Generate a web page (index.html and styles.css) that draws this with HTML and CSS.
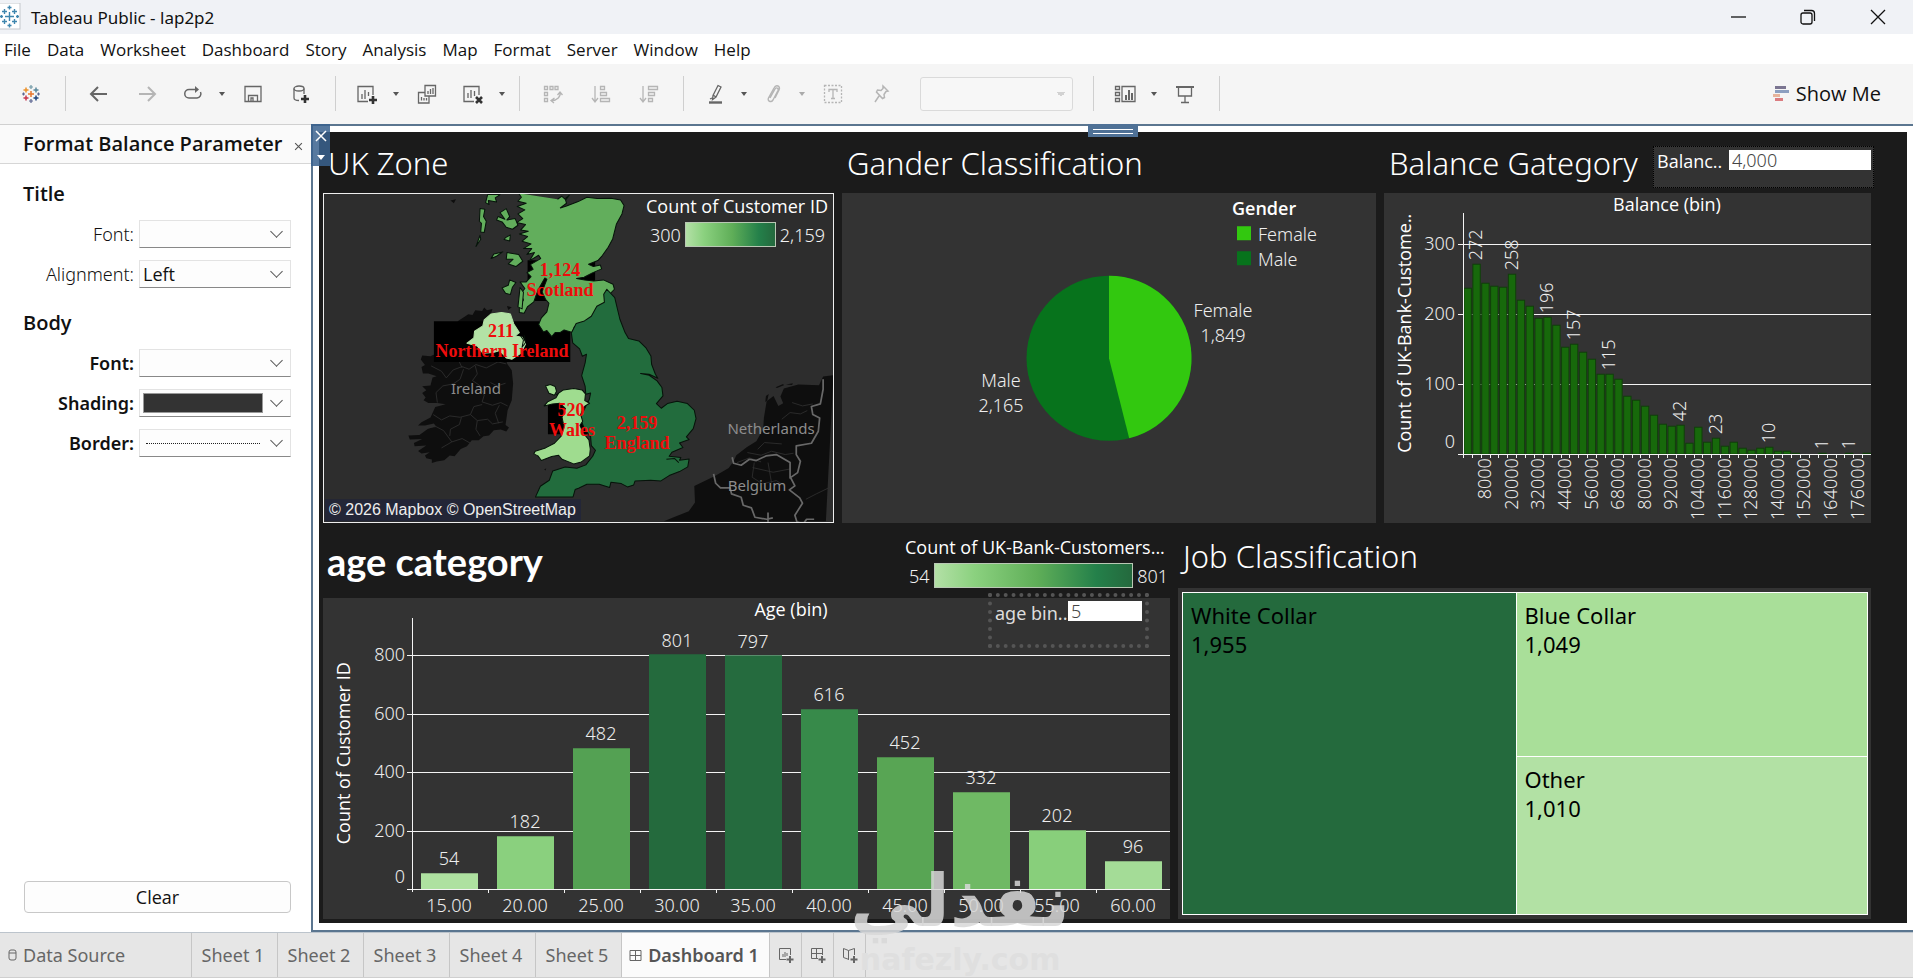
FILE: index.html
```html
<!DOCTYPE html>
<html lang="en">
<head>
<meta charset="utf-8">
<meta name="viewport" content="width=device-width, initial-scale=1">
<title>Tableau Public - lap2p2</title>
<link rel="stylesheet" href="styles.css">
</head>
<body>
<div class="app">
  <header class="titlebar">
    <svg class="app-icon" viewBox="0 0 22 28" width="22" height="28"><rect x="-2" y="0" width="22" height="26" fill="#fff" stroke="#c4c7cc"/><g stroke="#3f86ae" stroke-width="1.4"><path d="M9.500 9v9M5 13.500h9M9.500 2.500v4M7.500 4.500h4M9.500 20.500v4M7.500 22.500h4M4.500 6v5M2 8.500h5M14.500 6v5M12 8.500h5M4.500 16v5M2 18.500h5M14.500 16v5M12 18.500h5M1.500 12v3M0 13.500h3M17.500 12v3M16 13.500h3"/></g></svg>
    <span class="app-title">Tableau Public - lap2p2</span>
    <div class="window-controls">
      <button aria-label="Minimize"><svg width="16" height="16" viewBox="0 0 16 16"><path d="M1 8h15"/></svg></button>
      <button aria-label="Restore"><svg width="16" height="16" viewBox="0 0 16 16"><rect x="1" y="4" width="11" height="11" rx="2"/><path d="M4 1.500h7.500a3 3 0 0 1 3 3V12"/></svg></button>
      <button aria-label="Close"><svg width="16" height="16" viewBox="0 0 16 16"><path d="M1 1l14 14M15 1L1 15"/></svg></button>
    </div>
  </header>

  <nav class="menubar" aria-label="Main menu">
    <button>File</button><button>Data</button><button>Worksheet</button><button>Dashboard</button><button>Story</button><button>Analysis</button><button>Map</button><button>Format</button><button>Server</button><button>Window</button><button>Help</button>
  </nav>

  <div class="toolbar" role="toolbar" aria-label="Toolbar">
    <button class="tool logo" aria-label="Start page"><svg width="20" height="20" viewBox="0 0 20 20"><g fill="none" stroke-width="1.500"><path stroke="#e8762d" d="M10 7v6M7 10h6"/><path stroke="#c7364d" d="M5 11.500v5M2.500 14h5"/><path stroke="#eb9129" d="M5 3.500v5M2.500 6h5"/><path stroke="#59879b" d="M15 3.500v5M12.500 6h5"/><path stroke="#1f447e" d="M15 11.500v5M12.500 14h5"/><path stroke="#7199a6" stroke-width="1.200" d="M10 1v4M8 3h4"/><path stroke="#5b6591" stroke-width="1.200" d="M10 15v4M8 17h4M17.500 8.500v3M16 10h3M2.500 8.500v3M1 10h3"/></g></svg></button>
    <span class="sep"></span>
    <button class="tool" aria-label="Undo"><svg width="20" height="20" viewBox="0 0 20 20"><path d="M18 10H3M9 3l-7 7 7 7" stroke-width="2"/></svg></button>
    <button class="tool dim" aria-label="Redo"><svg width="20" height="20" viewBox="0 0 20 20"><path d="M2 10h15M11 3l7 7-7 7" stroke-width="2"/></svg></button>
    <div class="split"><button class="tool" aria-label="Replay"><svg width="20" height="20" viewBox="0 0 20 20"><path d="M14 5.500H6a4 4 0 0 0 0 8.500h8a4.200 4.200 0 0 0 3.500-6" stroke-width="1.500"/><path d="M12 2l4 3.500L12 9z" class="solid"/></svg></button><button class="caret" aria-label="Replay options"></button></div>
    <button class="tool" aria-label="Save"><svg width="20" height="20" viewBox="0 0 20 20"><path d="M2 2.500h16v15H2zM5.500 17.500v-6h9v6M8 17v-3h2v3"/></svg></button>
    <button class="tool" aria-label="New data source"><svg width="20" height="20" viewBox="0 0 20 20"><ellipse cx="8" cy="4.500" rx="5" ry="2.500"/><path d="M3 4.500v9.500c0 1.500 2 2.500 5 2.500M13 4.500V10"/><path d="M14 11v8M10 15h8" class="heavy"/></svg></button>
    <span class="sep"></span>
    <div class="split"><button class="tool" aria-label="New worksheet"><svg width="22" height="20" viewBox="0 0 22 20"><path d="M12 17.500H2v-15h15V11M6 10v5M9 6v9M12.500 8v4"/><path d="M17 12v8M13 16h8" class="heavy"/></svg></button><button class="caret" aria-label="New worksheet options"></button></div>
    <button class="tool" aria-label="Duplicate"><svg width="20" height="20" viewBox="0 0 20 20"><path d="M8 1.500h10.500V12H8zM11 7v3M13.500 5v5M16 4v6M8 8.500H1.500V19H12v-7M4.500 13v3.500M7 14v2.500M9.500 14v2.500"/></svg></button>
    <div class="split"><button class="tool" aria-label="Clear sheet"><svg width="22" height="20" viewBox="0 0 22 20"><path d="M12 17.500H2v-15h15V11M6 9v5M9 6v8M12.500 7v5"/><path d="M14 13l6 6M20 13l-6 6" class="heavy"/></svg></button><button class="caret" aria-label="Clear sheet options"></button></div>
    <span class="sep"></span>
    <button class="tool dim" aria-label="Swap rows and columns"><svg width="20" height="20" viewBox="0 0 20 20"><path d="M1.500 2.500h3v3h-3zM7 2.500h3v3H7zM12 2.500h3v3h-3zM1.500 8.500h3v3h-3zM1.500 14.500h3v3h-3zM17 8.500c1 4-3 8-8 8M14.500 11l2.500-3 2.500 3M11.500 14L8 16.500l3 2.500"/></svg></button>
    <button class="tool dim" aria-label="Sort ascending"><svg width="20" height="20" viewBox="0 0 20 20"><path d="M4 2v15M1 14l3 4 3-4M9.500 2.500h4v3h-4zM9.500 8.500h6v3h-6zM9.500 14.500h9v3h-9z"/></svg></button>
    <button class="tool dim" aria-label="Sort descending"><svg width="20" height="20" viewBox="0 0 20 20"><path d="M4 2v15M1 14l3 4 3-4M9.500 2.500h9v3h-9zM9.500 8.500h6v3h-6zM9.500 14.500h4v3h-4z"/></svg></button>
    <span class="sep"></span>
    <div class="split"><button class="tool" aria-label="Highlight"><svg width="20" height="20" viewBox="0 0 20 20"><path d="M13 1.500l3 1.500-5 10-3.500 2.500.5-4zM8 11l3 2M5 15l2-1"/><path d="M4 18.500h13" class="heavy-gray"/></svg></button><button class="caret" aria-label="Highlight options"></button></div>
    <div class="split dim"><button class="tool dim" aria-label="Group"><svg width="20" height="20" viewBox="0 0 20 20"><path d="M7 14l5-9c1-2 4-1 3 1.500l-5 9.500c-2 3-6 1-4.500-2L11 4c2-4 7-2 5 2l-4 8" stroke-width="1.400"/></svg></button><button class="caret" aria-label="Group options"></button></div>
    <button class="tool dim" aria-label="Show mark labels"><svg width="20" height="20" viewBox="0 0 20 20"><rect x="1.500" y="1.500" width="17" height="17" stroke-dasharray="2 1.500"/><path d="M6 8V5.500h8V8M10 5.500v9M8 14.500h4"/></svg></button>
    <button class="tool dim" aria-label="Fix axes"><svg width="20" height="20" viewBox="0 0 20 20"><path d="M12 2l5 5-2 .5-2 3 .5 3-2 1L5.500 8l1-2 3.500.5 2-2zM8 12l-4 6" stroke-width="1.500"/></svg></button>
    <select class="fit-select" aria-label="Fit" disabled><option></option></select>
    <span class="sep"></span>
    <div class="split"><button class="tool" aria-label="Show or hide cards"><svg width="22" height="20" viewBox="0 0 22 20"><path d="M1.500 2.500h4v3h-4zM1.500 8.500h4v3h-4zM1.500 14.500h4v3h-4zM8 2.500h13v15H8z"/><path d="M12 11v5M15 6v10M18 9v7" stroke-width="2"/></svg></button><button class="caret" aria-label="Card options"></button></div>
    <button class="tool" aria-label="Presentation mode"><svg width="20" height="20" viewBox="0 0 20 20"><path d="M3.500 3v9h13V3M10 12v6M6 18.500h8"/><path d="M1 3h18" stroke-width="2"/></svg></button>
    <span class="sep"></span>
    <button class="show-me"><svg width="16" height="16" viewBox="0 0 16 16"><path fill="#7b7591" d="M2 0h11v3H2z"/><path fill="#8c9fc0" d="M2 4h14v3H2z"/><path fill="#e6b49c" d="M0 8h7v3H0z"/><path fill="#db7c80" d="M2 12h8v3H2z"/></svg>Show Me</button>
  </div>

  <main class="workspace">
    <aside class="format-pane">
      <div class="pane-head"><h2>Format Balance Parameter</h2><button class="pane-close" aria-label="Close pane"><svg width="9" height="9" viewBox="0 0 8 8"><path d="M1 1l6 6M7 1L1 7" stroke="#555"/></svg></button></div>
      <div class="pane-body">
        <h3>Title</h3>
        <div class="field"><label for="tfont">Font:</label><div class="combo"><select id="tfont"><option></option></select></div></div>
        <div class="field"><label for="talign">Alignment:</label><div class="combo"><select id="talign"><option>Left</option></select></div></div>
        <h3>Body</h3>
        <div class="field strong"><label for="bfont">Font:</label><div class="combo"><select id="bfont"><option></option></select></div></div>
        <div class="field strong"><label for="bshade">Shading:</label><div class="combo"><select id="bshade"><option></option></select><span class="swatch"></span></div></div>
        <div class="field strong"><label for="bborder">Border:</label><div class="combo"><select id="bborder"><option></option></select><span class="dotline"></span></div></div>
      </div>
      <button class="clear">Clear</button>
    </aside>

    <section class="canvas">
      <div class="grip" aria-hidden="true"></div>
      <div class="float-tools"><button aria-label="Remove from dashboard"><svg width="12" height="12" viewBox="0 0 12 12"><path d="M1 1l10 10M11 1L1 11" stroke="#fff" stroke-width="1.500"/></svg></button><button aria-label="More options"><svg width="8" height="5" viewBox="0 0 8 5"><path d="M0 0h8L4 5z" fill="#fff"/></svg></button></div>
      <div class="dashboard">
        <div class="row top">
          <article class="tile">
            <div class="tile-head"><h1>UK Zone</h1></div>
            <div class="panel map">
              <svg class="chart" viewBox="1 1 509 328" role="img" aria-label="Map of customers by UK region">
                <g transform="scale(.34444 .33333) translate(-38 -222)">
                  <g fill="#0e0e0e">
                    <path d="M430 605l30-20 12 2 8-14 20 2 6-10 8 8 16-4-4 14 20 10 20 60 6 80 14 20 4 40-4 50-12 30-6 44 10 8-8 12-16-6-20 2-14 16-16 2-14 12-20 0-14 18-18 8-18 22-14-2-16 14-22 4-14 4 0-10-16-4-4-8 14-10-24 4-10-8 24-16-34 2-2-10 24-12-36 2-4-12 32-2 24-18 24-8-6-8-26 6-20 0 10-10 26-14 14-32 30-8-24-4-26 0-14-8 6-8-10-14 12-8-12-12 24-2 6-24 12-4-24-8-16 0-4-20 10-6-12-16 4-12 24 2 20-10 36-28z"/>
                    <path d="M1520 768l-30 4-12 26-60-2-42 12-10 24 8 20-14 8-14-30-20 16-8 50-2 34-20 36-28 18-30 24-8 18-14 20-40 24-60 30 2 50-18 26-44 18-28 12h470z"/>
                    <path d="M1324 830l8-6-4 20-6 4zM1352 804l22-10 2 4-20 8zM1382 796l20-4-2 5zM408 244l16-4-6 12zM680 1050l6-2-2 6zM572 560l14 4-10 8z"/>
                  </g>
                  <g fill="none" stroke="#2f2f2f" stroke-width="2.500">
                    <path d="M352 740l30 16 14 20 20-24 26-10 20 8 20-14 30 10 34-18 24 6M370 850l-4-30 20-20 30-6 20-14 10-30M480 740l6 24-14 20 20 14 14 30-6 20 30 10 24-8 20 10M500 856l-24 6-10 24-30 8-30-4-24 12-24-16M440 894l-6 22-26 14-2 20M466 886l20 18 30-4 14 14 30-6M486 904l-4 26 12 20M330 926l36-4 22 12 24 34-30 18M412 968l30-10 24 14M550 858l-12 24 10 30M448 700l-16 24 10 22M524 790l20 10 24-8"/>
                    <path d="M1270 1000l40 8 30-12 40 10 24-4M1240 1030l36-14 34 12M1300 990l20-20 50 4M1370 900l24-20 30 4 20-10M1400 850l30 10 30-6M1440 1140l30-16 40-20M1290 1030l-6 44 30 20 40-10 24 16M1330 1030l10 60M1285 1045l60 14 50-10"/>
                  </g>
                  <g fill="none" stroke="#686868" stroke-width="5" stroke-linejoin="round">
                    <path d="M1490 780v30l-8 44-26 8 4 24 20 10-4 40-20 36-44 8 0 26 12 20-8 34-22 16 0-46-40-24-30 4-28 14-20-4-24 18-22-6-4-18M1172 1064l6 28 14 14 28 0 4 18 28 10 6 24 24 8 10 28 34 6 18-4M1396 1076l12 24-16 12 30 24 8 16-22 36 6 20 18 6 10-14 22 0M1330 1180v28"/>
                  </g>
                  <g fill="#000"><path d="M360 606h396v122H360zM632 423h196v122H632zM691 845h140v100H691z"/></g>
                  <g stroke="#06130a" stroke-width="3" stroke-linejoin="round">
                    <path fill="#62ae5c" d="M606 222l8 12-10 12 24 6-26 10 22 10-20 12 14 14-18 12 26 6-14 16 22 4-26 8 24 8-16 14 26 8-22 14 24 0-14 18 22-6-14 24 26-16 6 10-30 18 8 14-18 10 12 12-14 16-18 0 14 20-12 16 8 18-12 18 0 20 14 2 10-20 18-14 8-24 10-22 14-26 6 4-14 38 10 22 10 12-6 26-16 18-8 20 14 22 10-4 14 18 10-12 14 0 12-8 24 8 6-18 24-2 20-6 16-24 22-30 22-12-2-23 14-15-4-15-28-13-28 3-26-3-24-4 22-4 24-13 27-12-4-12-20 5-14-7 27-11 13-15 17-25 13-25 11-45 16-30 6-25-10-17-28-5-40 1-30-4-25 13-34 13-18 6 18-14-4-14 12-10-10 14-12-11-12 9-9z"/>
                    <path fill="#62ae5c" d="M570 268l10 24-8 10 24-4 8 20-16 12-18-6-12-16-16-6 4-10 20 8-14-20zM516 226l36 0-14 10 4 12-24-4 2 12-10-6zM494 268l14 2-4 22 8 14-6 34-10-2 2-26-6-6zM494 348l2 12-14 22zM526 418l8-14 26-6-20 14zM580 482l18 8-10 14-6 22-14-4-10-16 18-8zM572 400l34 6 12 20-20 16-22-8 14-14-20 0zM568 355l14-8-2 18-16-4zM610 505l10 14-4 50-12-6z"/>
                    <path fill="#226c3d" d="M862 510l23 25 8 35 7 30 15 40 10 18 30 7 20 20 15 25 2 25 11 30 7 12-25-12-25-2 25 5 23 17 14 20 3 25-19 23 14 14 18-14 28-7 30 7 20 20 5 25-8 30-20 25 8 8-28 10 10 14-32 14-8 12 34 4-4 8 28-4-4 24-24 14-30 12-24 16-30-2-45 2-4 12-18 6-18-10-30-4-4 16-30-10-36 0-24 12-10 4-6 22H655l14-32 26-18 10-28 36-12 34 4 26-10 20-26 8-18-12-14-2-26-18-24-12-32 16-36 10-20 4-20-14 4-2-24-10-32 10-38 4-26-12 6-8-22-20-18-4-30 14-28 24-8 20-14 16-30 22-12-2-24z"/>
                    <path fill="#9fdc8f" d="M684 800l14-4 14 6 4 14-6 12-16-6zM716 826l20-14 30-4 24 4 10 12-2 20 14 8-16 10-10 24 6 20-8 12 10 24 16 20 4 28-2 20-24 18-22 6-34-14-10-12-20 4-30 12-10-14-12-6 4-8 30-10 26-14 20-22 8-26-6-30 10-26-16-16-22 2-24 6 10-12 24-12 8-14z"/>
                    <path fill="#b3e2a5" stroke="#b3e2a5" d="M526 584l30-4 26 4 10 30 16 26-12 10 20 4 10 20-14 28-26 18-16-4-18-22-20 6-30 2-16-22-30-8 20-16 2-20 24-16 4-18z"/>
                    <path fill="none" d="M612 650l8 12-4 22 10-14-4-22M1035 1020l24-2 12 12"/>
                  </g>
                </g>
                <rect x="2" y="306" width="256" height="22" fill="#232637"/>
                <g class="map-attr"><text x="6" y="322">© 2026 Mapbox © OpenStreetMap</text></g>
                <g class="map-place"><text x="153" y="201">Ireland</text><text x="448" y="241">Netherlands</text><text x="434" y="298">Belgium</text></g>
                <g class="map-mark"><text x="237" y="83">1,124</text><text x="237" y="103">Scotland</text><text x="178" y="144">211</text><text x="179" y="164">Northern Ireland</text><text x="248" y="223">520</text><text x="249" y="243">Wales</text><text x="314" y="236">2,159</text><text x="314" y="256">England</text></g>
              </svg>
              <div class="legend map-legend"><strong>Count of Customer ID</strong><div class="ramp-row"><span>300</span><i class="ramp"></i><span>2,159</span></div></div>
            </div>
          </article>

          <article class="tile">
            <div class="tile-head"><h1>Gander Classification</h1></div>
            <div class="panel">
              <svg class="chart" viewBox="0 0 534 330" role="img" aria-label="Pie chart of gender">
                <circle cx="267" cy="165" r="82.500" fill="#07731c"/>
                <path d="M267 165V82.500A82.500 82.500 0 0 1 287.200 245z" fill="#32c80f"/>
                <g class="mid"><text x="381" y="124">Female</text><text x="381" y="149">1,849</text><text x="159" y="194">Male</text><text x="159" y="219">2,165</text></g>
                <text class="semi" x="390" y="22">Gender</text>
                <rect x="395" y="33" width="14" height="14" fill="#32c80f"/><rect x="395" y="58" width="14" height="14" fill="#07731c"/>
                <text x="416" y="48">Female</text><text x="416" y="73">Male</text>
              </svg>
            </div>
          </article>

          <article class="tile">
            <div class="tile-head"><h1>Balance Gategory</h1><div class="param balance"><label for="bal">Balanc..</label><input id="bal" type="text" value="4,000"></div></div>
            <div class="panel"><svg class="chart" id="balance-chart" viewBox="0 0 487 330" role="img" aria-label="Histogram of balance">
              <text class="axis-title" x="283" y="18" text-anchor="middle">Balance (bin)</text>
              <text class="axis-title" transform="translate(27 140) rotate(-90)" text-anchor="middle">Count of UK-Bank-Custome..</text>
              <g class="grid"><path d="M74 51h413M74 121h413M74 191h413"/></g>
              <g class="end"><text x="71" y="57">300</text><text x="71" y="127">200</text><text x="71" y="197">100</text><text x="71" y="255">0</text></g>
            </svg></div>
          </article>
        </div>

        <div class="row bottom">
          <article class="tile">
            <div class="tile-head tall"><h1 class="age-title">age category</h1><div class="legend age-legend"><strong>Count of UK-Bank-Customers...</strong><div class="ramp-row"><span>54</span><i class="ramp"></i><span>801</span></div></div></div>
            <div class="panel">
              <svg class="chart" viewBox="0 0 847 320" role="img" aria-label="Bar chart of age">
                <text class="axis-title" x="468" y="18" text-anchor="middle">Age (bin)</text>
                <text class="axis-title" transform="translate(27 155) rotate(-90)" text-anchor="middle">Count of Customer ID</text>
                <g class="grid"><path d="M84 57h763M84 116h763M84 174h763M84 233h763"/></g>
                <g class="end"><text x="82" y="63">800</text><text x="82" y="122">600</text><text x="82" y="180">400</text><text x="82" y="239">200</text><text x="82" y="285">0</text></g>
                <rect x="98" y="275" width="57" height="16" fill="#aee1a0"/><rect x="174" y="238" width="57" height="53" fill="#8ad07e"/><rect x="250" y="150" width="57" height="141" fill="#54a153"/><rect x="326" y="56" width="57" height="235" fill="#246a3d"/><rect x="402" y="57" width="57" height="234" fill="#256b3e"/><rect x="478" y="111" width="57" height="180" fill="#378a4a"/><rect x="554" y="159" width="57" height="132" fill="#58a554"/><rect x="630" y="194" width="57" height="97" fill="#6fb964"/><rect x="706" y="232" width="57" height="59" fill="#88cf7b"/><rect x="782" y="263" width="57" height="28" fill="#a4dc97"/>
                <g class="grid"><path d="M89 20v274M84 291h763M165 291v4M241 291v4M317 291v4M393 291v4M469 291v4M545 291v4M621 291v4M697 291v4M773 291v4"/></g>
                <g class="mid"><text x="126" y="267">54</text><text x="202" y="230">182</text><text x="278" y="142">482</text><text x="354" y="49">801</text><text x="430" y="50">797</text><text x="506" y="103">616</text><text x="582" y="151">452</text><text x="658" y="186">332</text><text x="734" y="224">202</text><text x="810" y="255">96</text></g>
                <g class="mid"><text x="126" y="314">15.00</text><text x="202" y="314">20.00</text><text x="278" y="314">25.00</text><text x="354" y="314">30.00</text><text x="430" y="314">35.00</text><text x="506" y="314">40.00</text><text x="582" y="314">45.00</text><text x="658" y="314">50.00</text><text x="734" y="314">55.00</text><text x="810" y="314">60.00</text></g>
              </svg>
              <div class="param age"><label for="agebin">age bin..</label><input id="agebin" type="text" value="5"></div>
            </div>
          </article>

          <article class="tile">
            <div class="tile-head mid-head"><h1>Job Classification</h1></div>
            <div class="panel tree-panel">
              <div class="treemap">
                <div class="cell white">White Collar<br>1,955</div>
                <div class="cell blue">Blue Collar<br>1,049</div>
                <div class="cell other">Other<br>1,010</div>
              </div>
            </div>
          </article>
        </div>
      </div>
    </section>
  </main>

  <footer class="tabs">
    <button class="tab source"><svg width="10" height="12" viewBox="0 0 10 12"><rect x="1" y="1" width="7" height="10" rx="2"/><path d="M1 4h7"/></svg>Data Source</button>
    <button class="tab">Sheet 1</button><button class="tab">Sheet 2</button><button class="tab">Sheet 3</button><button class="tab">Sheet 4</button><button class="tab">Sheet 5</button>
    <button class="tab active"><svg width="13" height="13" viewBox="0 0 13 13"><path d="M1 1.500h11v10H1zM6.500 1.500v10M1 6.500h11"/></svg>Dashboard 1</button>
    <button class="tab add" aria-label="New worksheet"><svg width="16" height="16" viewBox="0 0 16 16"><path d="M8 12.500H1.500v-11h11V8M5 7v3M7 5v5M9 6v3"/><path d="M12 9v7M8.500 12.500h7" stroke-width="2"/></svg></button>
    <button class="tab add" aria-label="New dashboard"><svg width="16" height="16" viewBox="0 0 16 16"><path d="M8 11.500H1.500v-10h11V8M6.500 1.500v10M1.500 6.500h11"/><path d="M12 9v7M8.500 12.500h7" stroke-width="2"/></svg></button>
    <button class="tab add" aria-label="New story"><svg width="16" height="16" viewBox="0 0 16 16"><path d="M7 12.500l-5.500-2v-9l5 2 6-2V8M6.500 3.500v9"/><path d="M12 9v7M8.500 12.500h7" stroke-width="2"/></svg></button>
  </footer>
  <div class="watermark"><span lang="ar" dir="rtl">نفذلي</span><small>nafezly.com</small></div>
</div>
<script src="charts.js"></script>
</body>
</html>
```
FILE: styles.css
```css
* { box-sizing: border-box; }
body {
  margin: 0;
  font-family: "Noto Sans", "Open Sans", sans-serif;
  font-size: 18px;
  color: #111;
  background: #fff;
}
button, input, select { font: inherit; color: inherit; }
button { border: 0; padding: 0; background: none; }
h1, h2, h3 { margin: 0; }
.app { position: relative; display: flex; flex-direction: column; min-height: 100vh; padding-bottom: 1px; }

.titlebar { display: flex; align-items: center; height: 34px; background: #f0f2f6; overflow: hidden; }
.app-icon { margin-right: 9px; }
.app-title { font-size: 17px; }
.window-controls { display: flex; margin-left: auto; }
.window-controls button { width: 70px; display: grid; place-items: center; }
.window-controls svg { fill: none; stroke: #111; stroke-width: 1.3; }

.menubar { display: flex; align-items: center; gap: 16px; height: 30px; padding-left: 4px; font-family: "Open Sans", "Noto Sans", sans-serif; font-size: 17px; }

.toolbar { display: flex; align-items: center; height: 60px; padding-bottom: 1px; background: #f5f5f5; }
.tool { display: grid; place-items: center; width: 48px; height: 40px; }
.tool svg { fill: none; stroke: #666; stroke-width: 1.3; }
.tool .solid { fill: #666; stroke: none; }
.tool .heavy { stroke: #333; stroke-width: 2.6; }
.tool .heavy-gray { stroke-width: 2.4; }
.tool.dim svg { stroke: #b5b5b5; }
.tool.logo { width: 55px; padding-left: 6px; }
.split { display: flex; align-items: center; }
.split .tool { width: 44px; }
.caret { display: grid; place-items: center; width: 14px; height: 40px; }
.caret::after { content: ""; border: 3px solid transparent; border-top: 4px solid #555; border-bottom: 0; }
.split.dim .caret::after { border-top-color: #aaa; }
.sep { flex: none; width: 1px; height: 35px; margin: 0 9px 0 10px; background: #cfcfcf; }
.fit-select {
  appearance: none; width: 153px; height: 34px; margin: 0 10px 0 15px;
  border: 1px solid #d0d0d0; border-radius: 3px;
  background: linear-gradient(#c4c4c4, #c4c4c4) no-repeat 136px 14px / 8px 1px, linear-gradient(#c4c4c4, #c4c4c4) no-repeat 137px 15px / 6px 2px, linear-gradient(#c4c4c4, #c4c4c4) no-repeat 139px 17px / 2px 1px, #f8f8f8;
}
.show-me { display: flex; align-items: center; gap: 7px; margin-left: auto; margin-right: 32px; font-family: "Open Sans", sans-serif; font-size: 20px; }

.workspace { display: flex; flex: 1; min-height: 800px; }
.format-pane { display: flex; flex-direction: column; flex: none; width: 311px; border-top: 1px solid #d0d0d0; }
.pane-head { display: flex; align-items: center; justify-content: space-between; height: 39px; padding: 0 8px 0 23px; border-bottom: 1px solid #d6d6d6; background: #fafafa; }
.pane-head h2, .pane-body h3 { font-family: "Open Sans", sans-serif; font-size: 20px; line-height: 28px; font-weight: 600; }
.pane-head h2 { white-space: nowrap; }
.pane-body { display: grid; gap: 12px; padding: 16px 20px 0 23px; }
.pane-body h3:not(:first-child) { margin-top: 9px; }
.field { display: grid; grid-template-columns: 111px 1fr; gap: 5px; align-items: center; height: 28px; }
.field label { text-align: right; font-weight: 300; }
.field.strong label { font-weight: 600; }
.combo { position: relative; height: 28px; }
.combo select { appearance: none; display: block; width: 100%; height: 28px; padding: 0 3px; border: 1px solid #e3e3e3; border-bottom: 1px solid #888; background: #fdfdfd; font-family: "Open Sans", sans-serif; }
.combo::after { content: ""; position: absolute; right: 10px; top: 7px; width: 8px; height: 8px; border: solid #555; border-width: 0 1px 1px 0; transform: rotate(45deg); pointer-events: none; }
.swatch { position: absolute; left: 4px; top: 4px; width: 120px; height: 20px; background: #333; border: 1px solid #999; pointer-events: none; }
.dotline { position: absolute; left: 7px; top: 14px; width: 114px; border-top: 1px dotted #222; pointer-events: none; }
.clear { height: 32px; margin: auto 20px 19px 24px; border: 1px solid #c8c8c8; border-radius: 4px; background: #fdfdfd; font-family: "Open Sans", sans-serif; }

.canvas { position: relative; display: flex; flex: 1; min-width: 0; padding: 6px 6px 7px; border: 2px solid #5b7690; border-right: 0; background: #fff; }
.grip { position: absolute; z-index: 2; left: 775px; top: -2px; width: 50px; height: 13px; background: linear-gradient(#fff, #fff) center 5px / 40px 1px no-repeat, linear-gradient(#fff, #fff) center 9px / 40px 1px no-repeat, #4f7196; }
.float-tools { position: absolute; z-index: 2; left: -2px; top: -2px; width: 19px; height: 42px; display: grid; background: rgba(57, 98, 142, .85); }
.float-tools button { display: grid; place-items: center; }
.dashboard { flex: 1; min-width: 0; display: grid; grid-template-rows: 391fr 395fr; padding: 0 36px 4px 4px; background: #1b1b1b; color: #f2f2f2; font-weight: 300; }
.row { display: grid; gap: 8px; min-height: 0; }
.row.top { grid-template-columns: 511fr 534fr 487fr; }
.row.bottom { grid-template-columns: 847fr 693fr; }
.tile { display: flex; flex-direction: column; min-width: 0; min-height: 0; }
.tile-head { display: flex; align-items: center; justify-content: space-between; flex: none; height: 61px; padding-left: 5px; }
.tile-head.tall { height: 75px; padding-left: 4px; }
.tile-head.mid-head { height: 65px; }
.tile-head h1 { font-size: 31px; font-weight: 300; white-space: nowrap; color: #fff; }
.tile-head .age-title { font-family: Lato, sans-serif; font-size: 38px; font-weight: 700; }
.panel { position: relative; flex: 1; min-height: 0; background: #333; }
.panel.map { background: #2d2d2d; border: 1px solid #eee; overflow: hidden; }
.chart { display: block; width: 100%; height: 100%; overflow: visible; fill: #eee; font-size: 18px; font-weight: 300; }
.axis-title { font-family: "Open Sans", sans-serif; font-weight: 500; fill: #fff; }
.semi { font-family: "Open Sans", sans-serif; font-weight: 600; fill: #fff; }
.mid text { text-anchor: middle; }
.end text { text-anchor: end; }
.grid { stroke: #f4f4f4; fill: none; shape-rendering: crispEdges; }
.bars rect { fill: #17690b; stroke: #10400a; }
.map-attr { font-family: "Liberation Sans", Arial, sans-serif; font-size: 16px; font-weight: 400; }
.map-place text { font-size: 15px; font-weight: 400; fill: #8d8d8d; text-anchor: middle; }
.map-mark text { font-family: "Liberation Serif", serif; font-size: 18px; font-weight: 700; fill: #ee0c0c; text-anchor: middle; }

.legend strong { display: block; font-family: "Open Sans", sans-serif; font-weight: 500; line-height: 24px; white-space: nowrap; color: #fff; }
.ramp-row { display: flex; align-items: center; gap: 4px; }
.ramp { flex: 1; height: 25px; border: 1px solid #b9c8b4; background: linear-gradient(90deg, #b3e0a6, #8bd17f 20%, #5fae58 52%, #24804a 82%, #24693d); }
.map-legend { position: absolute; right: 8px; top: 0; width: 179px; }
.map-legend .ramp-row { padding: 4px 0 0 4px; }
.age-legend { width: 263px; margin-right: 2px; padding-top: 2px; }
.age-legend .ramp-row { padding: 4px 0 0 4px; }

.param { display: flex; align-items: flex-start; white-space: nowrap; }
.param label { line-height: 24px; font-weight: 400; }
.param input { min-width: 0; height: 20px; padding: 0 3px; border: 0; border-radius: 0; background: #fff; color: #444; font-weight: 300; }
.param.balance { width: 221px; height: 42px; margin: 8px -3px 0 0; padding: 2px 2px 0 3px; border: 1px dotted #000; background: #333; color: #fff; justify-content: space-between; }
.param.balance label { font-family: "Open Sans", sans-serif; font-weight: 500; }
.param.balance input { width: 142px; margin-top: 1px; }
.param.age { position: absolute; right: 21px; top: -5px; width: 161px; height: 55px; padding: 4px 3px 0 3px; border: 4px dotted #555; justify-content: space-between; color: #ddd; }
.param.age input { width: 74px; }

.tree-panel { display: flex; padding: 4px 3px 4px 4px; }
.treemap { flex: 1; display: grid; grid-template-columns: 333fr 351fr; grid-template-rows: 163fr 157fr; gap: 1px; padding: 1px; background: #fff; color: #000; }
.cell { padding: 8px; font-size: 22px; line-height: 29px; font-weight: 400; }
.cell.white { grid-row: 1 / 3; background: #246a3d; }
.cell.blue { background: #a9df99; }
.cell.other { background: #b2e1a4; }

.tabs { display: flex; height: 46px; border-top: 1px solid #bcc4cc; border-bottom: 1px solid #cfcfcf; background: #e6e6e6; color: #666; }
.tab { width: 86px; padding-right: 3px; border-right: 1px solid #c6c6c6; white-space: nowrap; }
.tab svg { fill: none; stroke: #666; }
.tab.source { display: flex; align-items: center; gap: 5px; width: 192px; padding-left: 8px; }
.tab.active { display: flex; align-items: center; justify-content: center; gap: 6px; width: 148px; background: #fbfbfb; font-weight: 600; color: #555; }
.tab.add { width: 32px; padding: 0; display: grid; place-items: center; }

.watermark { position: absolute; left: 850px; bottom: 0; display: grid; width: 212px; pointer-events: none; text-align: center; white-space: nowrap; justify-items: center; }
.watermark span { font: 700 72px/80px "DejaVu Sans", sans-serif; color: rgba(215, 215, 215, .85); }
.watermark small { font: 700 30px/38px "DejaVu Sans", sans-serif; color: #dfdfdf; }
```
FILE: charts.js
```js
(function () {
  var NS = 'http://www.w3.org/2000/svg';
  var svg = document.getElementById('balance-chart');
  var left = 79, base = 261, right = 487, bins = 46, step = (right - left) / bins;
  var heights = [166, 190, 171, 168, 167, 180, 154, 148, 136, 137, 129, 107, 110, 102, 95, 80, 80, 75, 58, 54, 48, 39, 30, 28, 29, 11, 27, 12, 16, 8, 12, 6, 4, 6, 7, 3, 3, 1, 0, 0, 1, 0, 0, 1, 0, 1];
  var labels = { 1: '272', 5: '258', 9: '196', 12: '157', 16: '115', 24: '42', 28: '23', 34: '10', 40: '1', 43: '1' };

  function add(parent, name, attrs, text) {
    var el = document.createElementNS(NS, name);
    Object.keys(attrs).forEach(function (k) { el.setAttribute(k, attrs[k]); });
    if (text) el.textContent = text;
    parent.appendChild(el);
    return el;
  }

  var bars = add(svg, 'g', { 'class': 'bars' });
  heights.forEach(function (h, i) {
    if (h) add(bars, 'rect', { x: left + i * step + 1, y: base - h, width: step - 1.5, height: h });
  });

  var d = 'M' + left + ' 20V' + (base + 4) + 'M74 ' + base + 'H' + right;
  for (var t = 1; t < bins; t++) d += 'M' + Math.round(left + t * step) + ' ' + base + 'v4';
  add(add(svg, 'g', { 'class': 'grid' }), 'path', { d: d });

  Object.keys(labels).forEach(function (i) {
    var x = left + (+i + 0.5) * step + 6, y = base - heights[i] - 4;
    add(svg, 'text', { transform: 'translate(' + x + ' ' + y + ') rotate(-90)' }, labels[i]);
  });
  for (var k = 0; k < 15; k++) {
    var cx = left + (2.5 + 3 * k) * step + 6;
    add(svg, 'text', { transform: 'translate(' + cx + ' 265) rotate(-90)', 'text-anchor': 'end' }, String(8000 + 12000 * k));
  }
})();
```
